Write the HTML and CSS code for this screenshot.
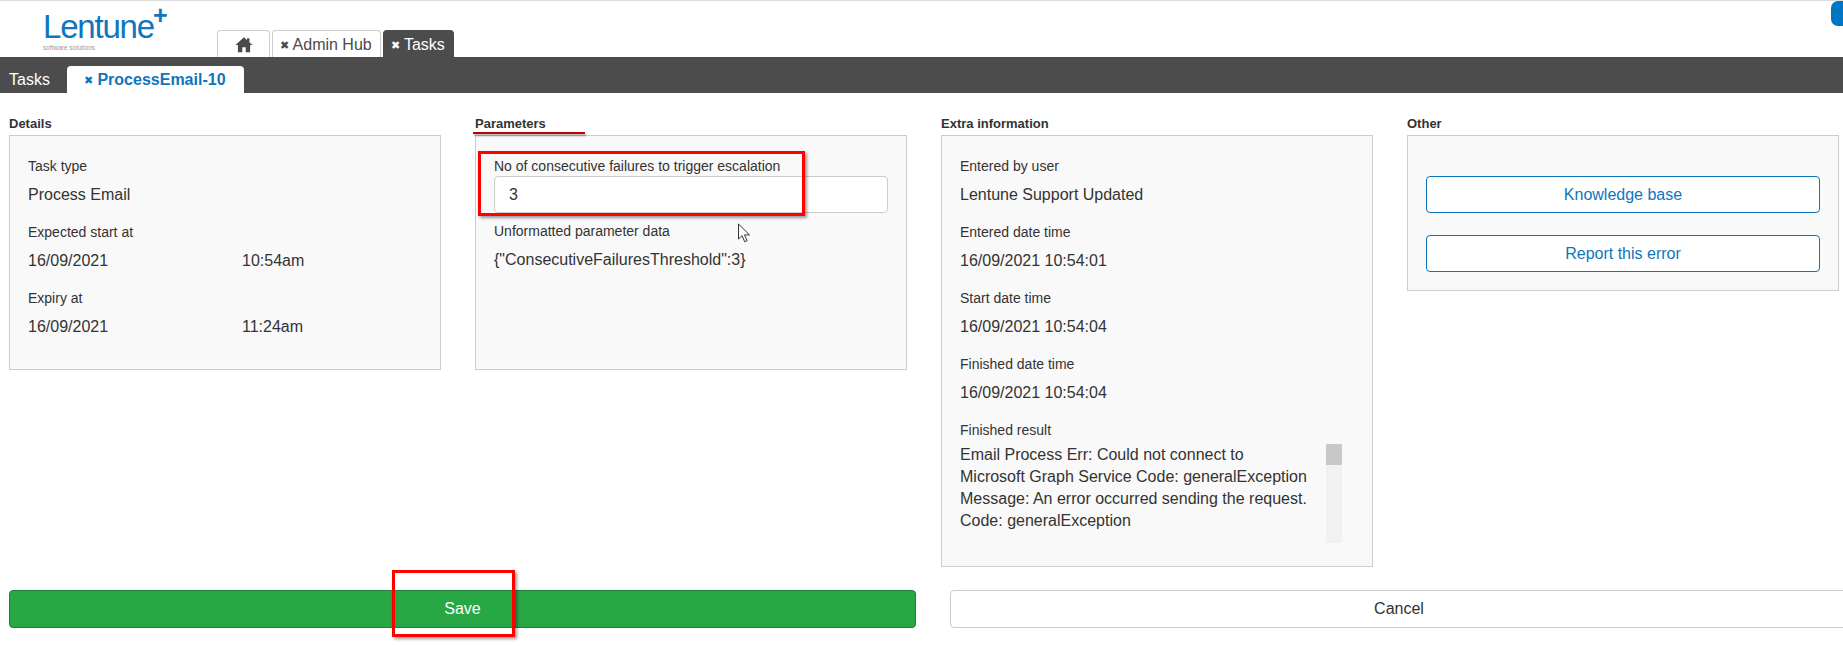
FILE: index.html
```html
<!DOCTYPE html>
<html lang="en">
<head>
<meta charset="utf-8">
<title>ProcessEmail-10</title>
<link rel="stylesheet" href="styles.css">
</head>
<body>
<header class="top">
  <div class="logo">
    <div class="logo-name">Lentune<span class="logo-plus">+</span></div>
    <div class="logo-sub">software solutions</div>
  </div>
  <nav class="main-tabs">
    <div class="mtab home"><svg class="home-icon" viewBox="0 0 20 18"><path d="M10 1 0.5 9.6h2.7V17.5h4.9v-5.4h3.8v5.4h4.9V9.6h2.7L16 6.5V2h-2.6v2.2z"/></svg></div>
    <div class="mtab"><span class="x">✖</span> Admin Hub</div>
    <div class="mtab active"><span class="x">✖</span> Tasks</div>
  </nav>
  <div class="corner"></div>
</header>
<nav class="sub-bar">
  <div class="stab">Tasks</div>
  <div class="stab active"><span class="x">✖</span> ProcessEmail-10</div>
</nav>
<main class="content">
  <div class="columns">
    <section class="col">
      <h2 class="col-title">Details</h2>
      <div class="panel panel-details">
        <div class="field"><div class="label">Task type</div><div class="value">Process Email</div></div>
        <div class="field"><div class="label">Expected start at</div><div class="value pair"><span>16/09/2021</span><span>10:54am</span></div></div>
        <div class="field"><div class="label">Expiry at</div><div class="value pair"><span>16/09/2021</span><span>11:24am</span></div></div>
      </div>
    </section>
    <section class="col">
      <h2 class="col-title">Parameters</h2>
      <div class="panel panel-details">
        <div class="label">No of consecutive failures to trigger escalation</div>
        <div class="input">3</div>
        <div class="label label-after">Unformatted parameter data</div>
        <div class="value">{"ConsecutiveFailuresThreshold":3}</div>
      </div>
    </section>
    <section class="col">
      <h2 class="col-title">Extra information</h2>
      <div class="panel panel-extra">
        <div class="field"><div class="label">Entered by user</div><div class="value">Lentune Support Updated</div></div>
        <div class="field"><div class="label">Entered date time</div><div class="value">16/09/2021 10:54:01</div></div>
        <div class="field"><div class="label">Start date time</div><div class="value">16/09/2021 10:54:04</div></div>
        <div class="field"><div class="label">Finished date time</div><div class="value">16/09/2021 10:54:04</div></div>
        <div class="label">Finished result</div>
        <div class="result">
          <div class="result-text">Email Process Err: Could not connect to Microsoft Graph Service Code: generalException<br>Message: An error occurred sending the request.<br>Code: generalException</div>
          <div class="scroll"><div class="thumb"></div></div>
        </div>
      </div>
    </section>
    <section class="col">
      <h2 class="col-title">Other</h2>
      <div class="panel panel-other">
        <a class="link-btn">Knowledge base</a>
        <a class="link-btn">Report this error</a>
      </div>
    </section>
  </div>
  <div class="actions">
    <button class="btn btn-save">Save</button>
    <button class="btn btn-cancel">Cancel</button>
  </div>
</main>
<div class="mark mark-line"></div>
<div class="mark mark-box mark-input"></div>
<div class="mark mark-box mark-save"></div>
<svg class="cursor" viewBox="0 0 13 20"><path d="M1 1v15l3.6-3.3 2.6 6 2.4-1-2.6-5.8H12z"/></svg>
</body>
</html>
```
FILE: styles.css
```css
* { box-sizing: border-box; }
html, body { margin: 0; padding: 0; }
body {
  width: 1843px;
  height: 647px;
  overflow: hidden;
  position: relative;
  background: #fff;
  color: #333;
  font-family: "Liberation Sans", Arial, sans-serif;
  font-size: 14px;
}
.top {
  height: 57px;
  border-top: 1px solid #ddd;
  display: flex;
  align-items: flex-end;
  position: relative;
}
.logo { width: 217px; height: 56px; padding: 11px 0 0 43px; }
.logo-name {
  color: #0f75bc;
  font-size: 33px;
  line-height: 30px;
  letter-spacing: -1.2px;
  position: relative;
  width: 122px;
}
.logo-plus {
  position: absolute;
  left: 110px;
  top: -9px;
  font-size: 25px;
  font-weight: bold;
  line-height: 25px;
}
.logo-sub { color: #999; font-size: 6.5px; line-height: 8px; margin-top: 2px; }
.main-tabs { display: flex; gap: 2px; }
.mtab {
  height: 27px;
  padding: 0 8px 0 7px;
  border: 1px solid #ccc;
  border-bottom: 0;
  border-radius: 4px 4px 0 0;
  font-size: 16px;
  line-height: 28px;
  color: #4a4a4a;
  white-space: nowrap;
}
.mtab.home { width: 53px; display: flex; justify-content: center; align-items: center; padding: 0; }
.home-icon { width: 18px; height: 17px; fill: #4a4a4a; }
.mtab.active {
  background: #4c4c4c;
  border-color: #4c4c4c;
  color: #fff;
}
.x { font-size: 11px; vertical-align: 1px; }
.corner {
  position: absolute;
  top: 0;
  right: 0;
  width: 12px;
  height: 25px;
  background: #0074c5;
  border-radius: 7px 0 0 7px;
}
.sub-bar {
  height: 36px;
  background: #4c4c4c;
  display: flex;
  align-items: flex-end;
}
.stab {
  height: 27px;
  font-size: 16px;
  line-height: 27px;
  color: #fff;
  padding: 0 18px 0 9px;
  width: 67px;
}
.stab.active {
  width: 177px;
  background: #fff;
  color: #0f75bc;
  font-weight: bold;
  border-radius: 4px 4px 0 0;
  padding: 0 0 0 17px;
}
.stab .x { font-weight: normal; }
.content { padding: 0 4px 0 9px; }
.columns { display: grid; grid-template-columns: repeat(4, 432px); column-gap: 34px; height: 497px; }
.col-title {
  margin: 0;
  padding-top: 23px;
  height: 42px;
  font-size: 13px;
  line-height: 16px;
  font-weight: bold;
}
.panel {
  background: #f9f9f9;
  border: 1px solid #ccc;
  padding: 20px 18px 0;
}
.panel-details { height: 235px; }
.panel-extra { height: 432px; }
.panel-other { height: 156px; padding-top: 40px; display: flex; flex-direction: column; gap: 22px; background: #f9f9f9; }
.field { height: 66px; }
.label { font-size: 14px; line-height: 20px; color: #333; }
.value { font-size: 16px; line-height: 20px; margin-top: 9px; color: #333; }
.pair { display: grid; grid-template-columns: 214px 1fr; }
.input {
  height: 37px;
  margin: 0 0 0 0;
  background: #fff;
  border: 1px solid #ccc;
  border-radius: 4px;
  font-size: 16px;
  line-height: 35px;
  padding-left: 14px;
}
.label-after { margin-top: 8px; }
.result { display: flex; gap: 14px; margin-top: 4px; height: 100px; }
.result-text { width: 352px; font-size: 16px; line-height: 22px; }
.scroll { width: 16px; height: 99px; background: #f1f1f1; }
.thumb { height: 21px; background: #c8c8c8; }
.link-btn {
  display: block;
  height: 37px;
  border: 1px solid #0f75bc;
  border-radius: 4px;
  background: #fff;
  color: #0f75bc;
  font-size: 16px;
  line-height: 35px;
  text-align: center;
}
.actions { display: grid; grid-template-columns: 907px 1fr; column-gap: 34px; padding-right: 0; }
.btn {
  height: 38px;
  border-radius: 4px;
  font-family: inherit;
  font-size: 16px;
  padding: 0;
}
.btn-save { background: #28a745; border: 1px solid #1e7e34; color: #fff; }
.btn-cancel { background: #fff; border: 1px solid #ccc; color: #333; width: 898px; }
.mark { position: absolute; }
.mark-line {
  left: 473px;
  top: 132px;
  width: 112px;
  height: 2px;
  background: #c00000;
  box-shadow: 1px 2px 2px rgba(0,0,0,.35);
}
.mark-box { border: 3px solid #f00; box-shadow: 2px 2px 3px rgba(0,0,0,.4); }
.mark-input { left: 478px; top: 151px; width: 327px; height: 65px; }
.mark-save { left: 392px; top: 570px; width: 123px; height: 67px; }
.cursor {
  position: absolute;
  left: 737px;
  top: 223px;
  width: 14px;
  height: 20px;
  fill: #fff;
  stroke: #333;
  stroke-width: 1;
}
```
